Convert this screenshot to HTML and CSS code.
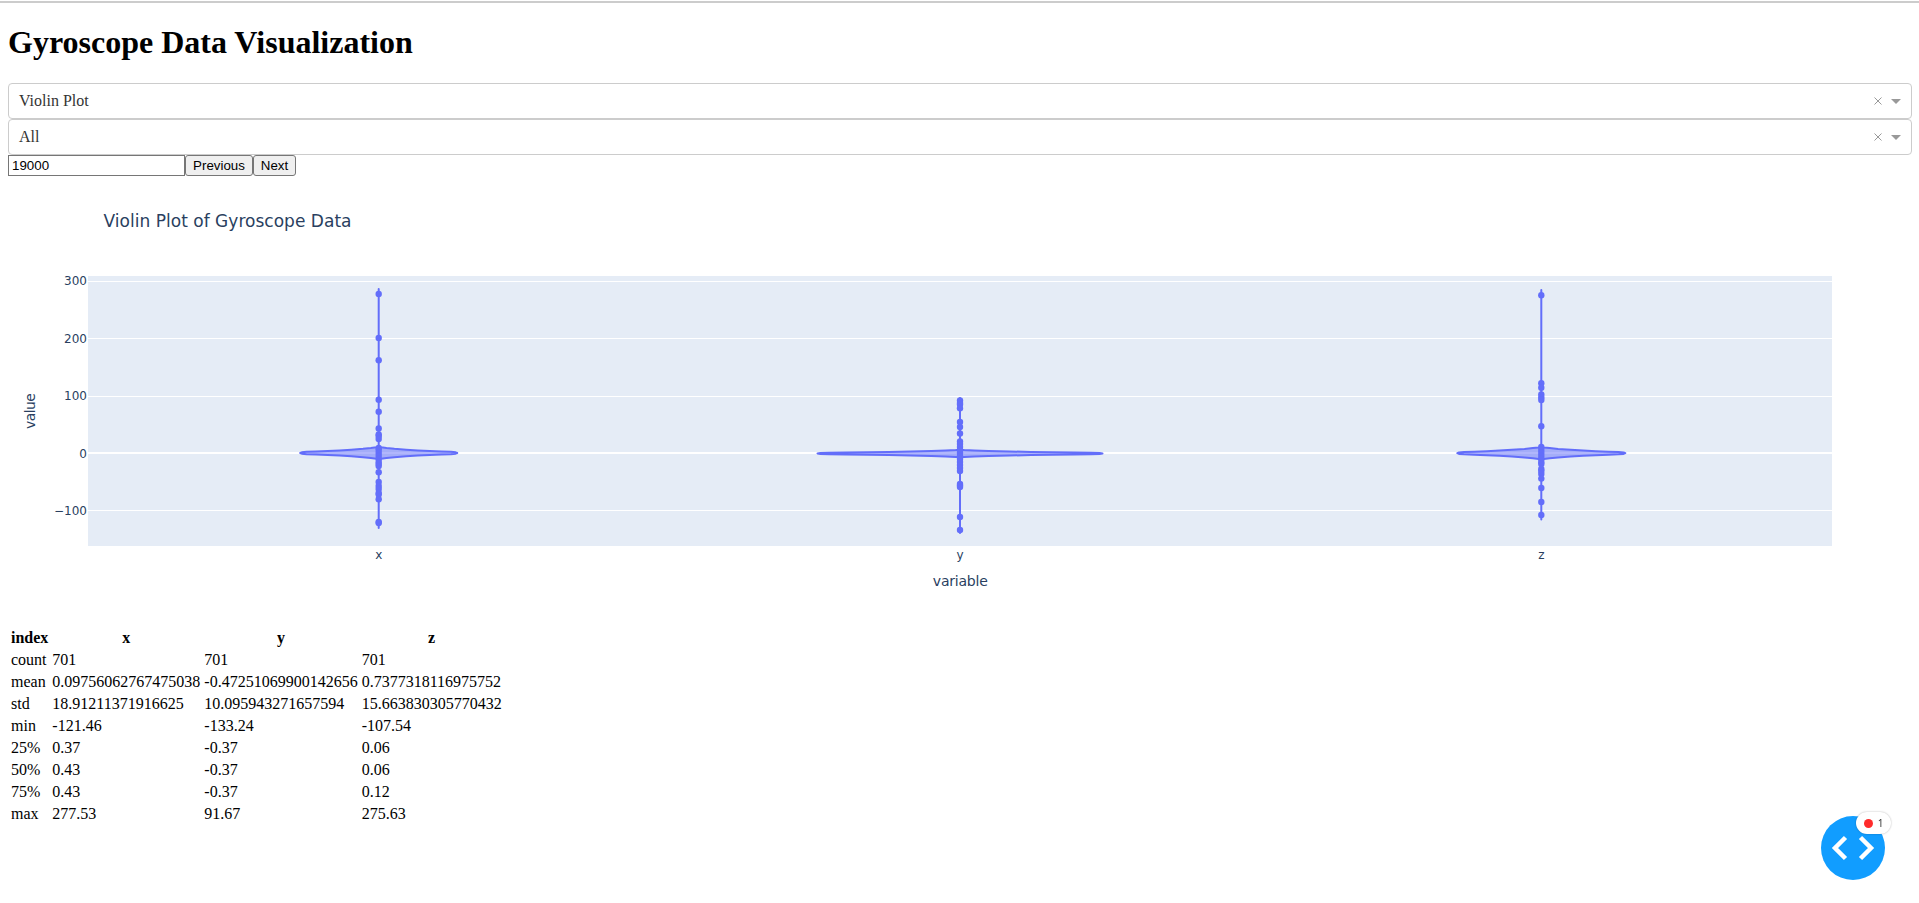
FILE: index.html
```html
<!DOCTYPE html>
<html lang="en">
<head>
<meta charset="utf-8">
<title>Gyroscope Data Visualization</title>
<link rel="stylesheet" href="styles.css">
</head>
<body>
<h1 class="title">Gyroscope Data Visualization</h1>
<div class="select"><span class="value">Violin Plot</span><svg class="clear" viewBox="0 0 8 8"><path d="M.5.5l7 7M7.5.5L.5 7.5"/></svg><span class="arrow"></span></div>
<div class="select"><span class="value">All</span><svg class="clear" viewBox="0 0 8 8"><path d="M.5.5l7 7M7.5.5L.5 7.5"/></svg><span class="arrow"></span></div>
<div class="controls"><input class="size" value="19000"><button class="prev">Previous</button><button class="next">Next</button></div>
<svg class="chart" viewBox="8 176 1903 450">
  <rect class="plot" x="88" y="276" width="1744" height="270"/>
  <path class="grid" d="M88 281.5H1832M88 338.5H1832M88 396.5H1832M88 510.5H1832"/>
  <path class="zero" d="M88 453H1832"/>
  <g id="violins"></g>
  <text class="heading" x="103.5" y="226.5" textLength="248">Violin Plot of Gyroscope Data</text>
  <g class="ticks end">
    <text x="87" y="285">300</text><text x="87" y="343">200</text><text x="87" y="400">100</text><text x="87" y="458">0</text><text x="87" y="515">−100</text>
  </g>
  <g class="ticks mid">
    <text x="378.7" y="559">x</text><text x="960" y="559">y</text><text x="1541.3" y="559">z</text>
  </g>
  <text class="axis mid" x="960.3" y="586" textLength="55">variable</text>
  <text class="axis mid" transform="translate(35 411) rotate(-90)" textLength="36">value</text>
</svg>
<table>
<tr><th>index</th><th>x</th><th>y</th><th>z</th></tr>
<tr><td>count</td><td>701</td><td>701</td><td>701</td></tr>
<tr><td>mean</td><td>0.09756062767475038</td><td>-0.47251069900142656</td><td>0.7377318116975752</td></tr>
<tr><td>std</td><td>18.91211371916625</td><td>10.095943271657594</td><td>15.663830305770432</td></tr>
<tr><td>min</td><td>-121.46</td><td>-133.24</td><td>-107.54</td></tr>
<tr><td>25%</td><td>0.37</td><td>-0.37</td><td>0.06</td></tr>
<tr><td>50%</td><td>0.43</td><td>-0.37</td><td>0.06</td></tr>
<tr><td>75%</td><td>0.43</td><td>-0.37</td><td>0.12</td></tr>
<tr><td>max</td><td>277.53</td><td>91.67</td><td>275.63</td></tr>
</table>
<div class="debug"><svg viewBox="0 0 64 64"><path d="M24.5 21.5L14 32L24.5 42.5M39.5 21.5L50 32L39.5 42.5"/></svg>
<div class="badge"><i class="dot"></i><span>1</span></div></div>
<script src="chart.js"></script>
</body>
</html>
```
FILE: styles.css
```css
html { border-top: 1px solid #fff; }
body { margin: 0; padding: 0 7px 0 8px; border-top: 2px solid #ccc; height: 900px; overflow: hidden; font: 16px "Liberation Serif", serif; color: #000; background: #fff; }
.title { margin: 21px 0 22px; font-size: 32px; line-height: 37px; font-weight: bold; }
.select { box-sizing: border-box; height: 36px; border: 1px solid #ccc; border-radius: 4px; padding: 0 10px; display: flex; align-items: center; color: #333; }
.value { flex: 1; line-height: 34px; }
.clear { width: 8px; height: 8px; margin-right: 9px; stroke: #999; fill: none; stroke-width: 1; }
.arrow { border: 5px solid transparent; border-top-color: #999; border-bottom: 0; }
.controls { display: flex; height: 21px; }
.size, .prev, .next { box-sizing: border-box; margin: 0; height: 21px; font: 13.333px "Liberation Sans", Arial, sans-serif; color: #000; border: 1px solid #767676; }
.size { width: 177px; padding: 1px 3px; }
.prev, .next { background: #efefef; border-radius: 3px; padding: 0; }
.prev { width: 68px; }
.next { width: 43px; }
.chart { display: block; width: 1903px; height: 450px; font-family: "DejaVu Sans", Verdana, sans-serif; }
.plot { fill: #e5ecf6; }
.grid { stroke: #fff; stroke-width: 1; }
.zero { stroke: #fff; stroke-width: 2; }
.chart text { fill: #2a3f5f; }
.heading { font-size: 17px; }
.ticks { font-size: 12px; }
.axis { font-size: 14px; }
.end { text-anchor: end; }
.mid { text-anchor: middle; }
.violin { fill: #636efa; fill-opacity: .5; stroke: #636efa; stroke-width: 2; stroke-linejoin: round; }
.point { fill: #636efa; }
table { border-spacing: 2px; }
td, th { padding: 1px; line-height: 18px; }
.debug { position: fixed; left: 1821px; top: 816px; width: 64px; height: 64px; border-radius: 50%; background: #119dff; }
.debug svg { display: block; fill: none; stroke: #fff; stroke-width: 4.5; }
.badge { position: absolute; left: 35px; top: -4px; width: 35px; height: 22px; border-radius: 11px; background: #fff; box-shadow: 0 0 2px rgba(0,0,0,.3); display: flex; align-items: center; justify-content: center; gap: 5px; font: 10px "Noto Sans", sans-serif; color: #333; }
.dot { width: 9px; height: 9px; border-radius: 50%; background: #ff2b2b; }
```
FILE: chart.js
```js
const series = [
  { c: 378.7, top: 289, bottom: 528, mid: 453, half: 78.5, spread: 5.8,
    points: [294, 338, 360.3, 399.7, 411.7, 428.5, 434.5, 436, 439, 448, 450, 453, 456, 459, 462, 464, 466, 472.3, 482, 486, 489, 493, 494.5, 499.3, 522, 523] },
  { c: 960, top: 398, bottom: 533, mid: 453.5, half: 142.5, spread: 3.5,
    points: [400.5, 403, 404.5, 408.3, 422, 427, 433.5, 441.5, 444, 447, 450, 453, 456, 459, 462, 465, 468, 471, 484, 485.5, 487, 517, 530] },
  { c: 1541.3, top: 290, bottom: 519.5, mid: 453.2, half: 84, spread: 5.8,
    points: [295.2, 383.3, 387.7, 394.5, 397.5, 400, 426.3, 447, 450, 453, 456, 459, 462, 464, 469, 471, 474, 478.6, 488, 502, 515] }
];
// Half-width fraction and distance from the centre line, from the middle outwards.
const outline = [[0, 1.1], [.03, 1], [.1, .88], [.2, .74], [.35, .58], [.5, .45], [.65, .35], [.8, .27], [.92, .2], [.98, .12], [1, 0]];
let out = '';
for (const s of series) {
  const pt = (sx, sy) => ([f, g]) => `${s.c + sx * f * s.half} ${s.mid + sy * g * s.spread}`;
  const back = [...outline].reverse();
  const pts = [
    `${s.c} ${s.top}`, ...outline.map(pt(1, -1)), ...back.map(pt(1, 1)),
    `${s.c} ${s.bottom}`, ...outline.map(pt(-1, 1)), ...back.map(pt(-1, -1))
  ];
  out += `<path class="violin" d="M${pts.join('L')}Z"/>`;
  for (const y of s.points) out += `<circle class="point" cx="${s.c}" cy="${y}" r="3.2"/>`;
}
document.getElementById('violins').innerHTML = out;
```
